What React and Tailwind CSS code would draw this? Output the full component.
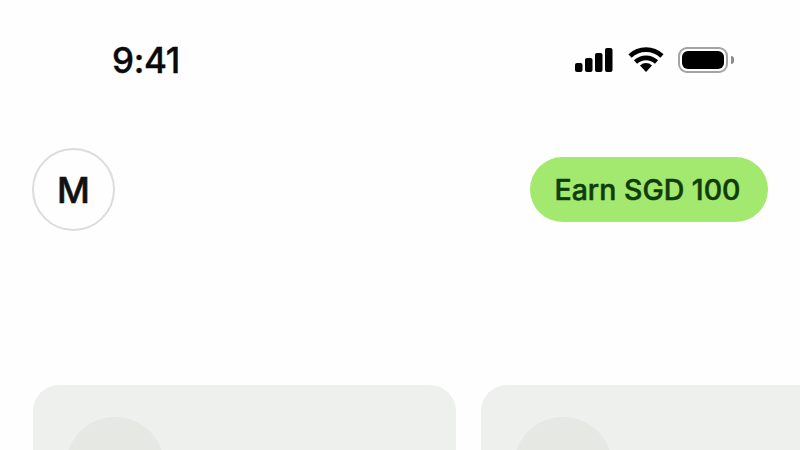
function SignalIcon() {
  return (
    <svg width="40" height="26" viewBox="0 0 40 26" fill="#000">
      <rect x="1" y="16" width="7.5" height="9" rx="2" />
      <rect x="11" y="11" width="7.5" height="14" rx="2" />
      <rect x="21" y="6" width="7.5" height="19" rx="2" />
      <rect x="31" y="1" width="7.5" height="24" rx="2" />
    </svg>
  );
}

function WifiIcon() {
  return (
    <svg width="36" height="26" viewBox="0 0 36 26" fill="none" stroke="#000" strokeWidth="4.6">
      <path d="M2 9C11 .5 25 .5 34 9" />
      <path d="M7.5 15C13.5 9.5 22.5 9.5 28.5 15" />
      <path d="M12 18.5L18 25L24 18.5C20.5 15.2 15.5 15.2 12 18.5Z" fill="#000" stroke="none" />
    </svg>
  );
}

function BatteryIcon() {
  return (
    <div className="flex items-center gap-[3px]">
      <div className="w-[50px] h-[26px] rounded-[9px] border-[2px] border-[#a3a3a3] p-[2px]">
        <div className="w-full h-full rounded-[6px] bg-black" />
      </div>
      <div className="w-[3px] h-[8px] rounded-r-full bg-[#8c8c8c]" />
    </div>
  );
}

function Card() {
  return (
    <div className="w-[423px] h-[200px] shrink-0 rounded-[26px] bg-[#eef0ed] pt-[32px] pl-[33px]">
      <div className="w-[98px] h-[98px] rounded-full bg-[#e5e8e3]" />
    </div>
  );
}

export default function App() {
  return (
    <div className="w-[800px] h-[450px] overflow-hidden bg-[#fefefe] font-['Inter',sans-serif]">
      <div className="flex items-center justify-between pt-[39px] pl-[112px] pr-[66px] h-[81px]">
        <span className="text-[35px] leading-[40px] font-medium tracking-[-0.3px] text-[#0a0a0a] [-webkit-text-stroke:0.4px]">9:41</span>
        <div className="flex items-center gap-[14px]">
          <SignalIcon />
          <WifiIcon />
          <BatteryIcon />
        </div>
      </div>

      <div className="flex items-center justify-between mt-[67px] pl-[32px] pr-[32px]">
        <div className="w-[83px] h-[83px] rounded-full border-2 border-[#dcdcdc] flex items-center justify-center text-[36px] font-medium text-[#111] [-webkit-text-stroke:0.6px]">
          M
        </div>
        <button className="h-[65px] w-[238px] pr-[3px] pt-[2px] rounded-full bg-[#a3e86f] text-[28.5px] font-medium text-[#0f3d0a] [-webkit-text-stroke:0.5px]">
          Earn SGD 100
        </button>
      </div>

      <div className="flex gap-[25px] mt-[154px] pl-[33px]">
        <Card />
        <Card />
      </div>
    </div>
  );
}
